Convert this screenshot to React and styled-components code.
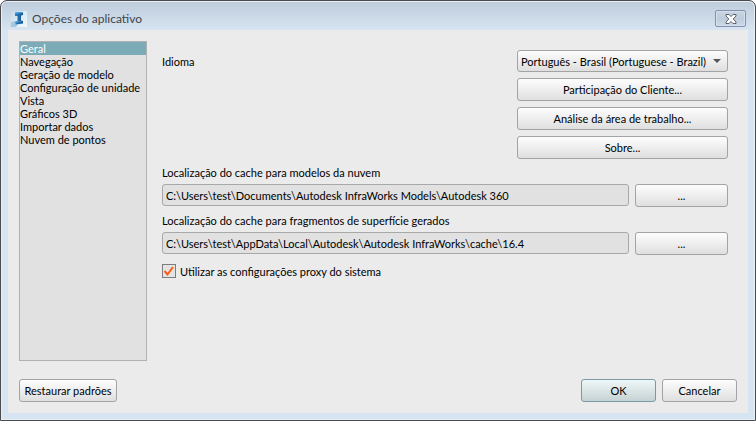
import React, { useState } from 'react';
import styled, { createGlobalStyle, css } from 'styled-components';

const GlobalStyle = createGlobalStyle`
	* {
		box-sizing: border-box;
	}
	body {
		margin: 0;
		background: #fff;
	}
	body, button, input, select {
		font-family: Lato, 'Noto Sans', sans-serif;
		font-size: 11px;
		line-height: 13px;
		color: #000;
	}
`;

const Window = styled.div`
	display: flex;
	flex-direction: column;
	min-height: 100vh;
	padding: 0 7px 7px;
	border: 1px solid #4b4a4d;
	border-radius: 7px 7px 0 0;
	background: linear-gradient(#bdcbdb, #d7e4f1 29px);
	box-shadow: inset 0 0 0 1px #e6eef6;
`;

const TitleBar = styled.header`
	display: flex;
	align-items: center;
	height: 29px;
	padding: 6px 2px 0;
`;

const Title = styled.h1`
	flex: 1;
	margin: 0 0 0 5px;
	font-size: 12px;
	font-weight: 400;
	line-height: 16px;
	color: #3f4449;
`;

const CloseButton = styled.button`
	display: flex;
	align-items: center;
	justify-content: center;
	width: 31px;
	height: 17px;
	padding: 0;
	border: 1px solid #8391ae;
	border-radius: 2px;
	background: linear-gradient(#c9d5e3, #bfccdb 50%, #cbd8e6);
	box-shadow: inset 0 0 0 1px #d6e0ec;
`;

const Content = styled.main`
	display: flex;
	flex: 1;
	flex-direction: column;
	gap: 18px;
	padding: 11px;
	background: #ebebeb;
`;

const Columns = styled.div`
	display: flex;
	flex: 1;
	gap: 15px;
`;

const Sidebar = styled.nav`
	flex: 0 0 128px;
	border: 1px solid #b1b1b1;
	background: #e1e1e1;
`;

const SidebarItem = styled.button`
	display: block;
	width: 100%;
	height: 13px;
	padding: 0;
	border: 0;
	background: ${(p) => (p.$active ? '#7aabb7' : 'transparent')};
	color: ${(p) => (p.$active ? '#fff' : '#000')};
	text-align: left;
	white-space: nowrap;
`;

const Panel = styled.section`
	display: flex;
	flex: 1;
	flex-direction: column;
	gap: 7px;
	min-width: 0;
	padding: 9px 9px 0 0;
`;

const LanguageRow = styled.div`
	display: flex;
	align-items: flex-start;
	justify-content: space-between;
`;

const LanguageLabel = styled.label`
	padding-top: 5px;
`;

const ActionColumn = styled.div`
	display: flex;
	flex-direction: column;
	gap: 6px;
	width: 211px;
`;

const raised = css`
	border: 1px solid #a3a3a3;
	border-radius: 3px;
	background: linear-gradient(#fdfdfd, #dfdfdf);
`;

const Button = styled.button`
	${raised};
	flex: ${(p) => (p.$width ? `0 0 ${p.$width}px` : '0 0 auto')};
	height: 23px;
	padding: 0;
	white-space: nowrap;

	${(p) =>
		p.$primary &&
		css`
			border-color: #7a9aa3;
			background: linear-gradient(#eff8f8, #c6d2d3);
		`}
`;

const SelectBox = styled.div`
	position: relative;
	height: 22px;

	svg {
		position: absolute;
		top: 8px;
		right: 6px;
		pointer-events: none;
	}
`;

const Select = styled.select`
	${raised};
	appearance: none;
	width: 100%;
	height: 22px;
	padding: 0 0 0 3px;
`;

const Field = styled.div`
	display: flex;
	flex-direction: column;
	gap: 5px;
`;

const FieldRow = styled.div`
	display: flex;
	align-items: flex-start;
	gap: 6px;
`;

const PathInput = styled.input`
	flex: 1;
	min-width: 0;
	height: 22px;
	padding: 0 3px;
	border: 1px solid #a8a8a8;
	border-radius: 3px;
	background: #e1e1e1;
`;

const CheckLabel = styled.label`
	display: flex;
	align-items: center;
	align-self: flex-start;
	gap: 4px;
	padding-top: 2px;
`;

const CheckBox = styled.span`
	position: relative;
	width: 14px;
	height: 14px;

	input {
		appearance: none;
		display: block;
		width: 14px;
		height: 14px;
		margin: 0;
		border: 1px solid #7d7d7d;
		background: #e4e4e4;
	}

	svg {
		position: absolute;
		inset: 0;
		pointer-events: none;
	}
`;

const Footer = styled.footer`
	display: flex;
	gap: 6px;
`;

const Spacer = styled.div`
	flex: 1;
`;

const sections = [
	'Geral',
	'Navegação',
	'Geração de modelo',
	'Configuração de unidade',
	'Vista',
	'Gráficos 3D',
	'Importar dados',
	'Nuvem de pontos',
];

const Logo = () => (
	<svg width="17" height="16" viewBox="-1 0 17 16" aria-hidden="true">
		<defs>
			<linearGradient id="logoBack" x1="0" y1="0" x2="1" y2="1">
				<stop offset="0" stopColor="#c3d9ea" />
				<stop offset="0.5" stopColor="#dcebf5" />
				<stop offset="1" stopColor="#f2f7fa" />
			</linearGradient>
			<linearGradient id="logoBeam" x1="0" y1="0" x2="1" y2="0">
				<stop offset="0" stopColor="#2b86c8" />
				<stop offset="1" stopColor="#174f86" />
			</linearGradient>
		</defs>
		<path fill="url(#logoBack)" d="M0 0h16v16H0z" />
		<path fill="#a3c8e2" d="M0 11l4-1 3 3-2 3H0z" />
		<path fill="url(#logoBeam)" d="M4 1.500l8-.5v3l-2 .5v5l2 .5v2.500l-7.500 1v-3l2-.5v-5L4 5z" />
		<path fill="#4aa3dc" d="M4 1.500l8-.5v1l-8 1zM4.500 10.500L12 10l-7.500 2z" />
	</svg>
);

const CloseIcon = () => (
	<svg width="12" height="10" viewBox="0 0 12 10" aria-hidden="true">
		<path
			d="M1 .5h3L6 2.500 8 .5h3v1.500L8.200 5 11 8v1.500H8L6 7.500 4 9.500H1V8L3.800 5 1 2z"
			fill="#fff"
			stroke="#5a5f6d"
			strokeLinejoin="round"
		/>
	</svg>
);

export default function App() {
	const [active, setActive] = useState('Geral');
	const [useProxy, setUseProxy] = useState(true);

	return (
		<>
			<GlobalStyle />
			<Window>
				<TitleBar>
					<Logo />
					<Title>Opções do aplicativo</Title>
					<CloseButton type="button" aria-label="Fechar">
						<CloseIcon />
					</CloseButton>
				</TitleBar>
				<Content>
					<Columns>
						<Sidebar>
							{sections.map((name) => (
								<SidebarItem
									key={name}
									type="button"
									$active={name === active}
									onClick={() => setActive(name)}
								>
									{name}
								</SidebarItem>
							))}
						</Sidebar>
						<Panel>
							<LanguageRow>
								<LanguageLabel htmlFor="language">Idioma</LanguageLabel>
								<ActionColumn>
									<SelectBox>
										<Select id="language">
											<option>Português - Brasil (Portuguese - Brazil)</option>
										</Select>
										<svg width="10" height="6" viewBox="0 0 10 6" aria-hidden="true">
											<path fill="#555" d="M1 1h8L5 5z" />
										</svg>
									</SelectBox>
									<Button type="button">Participação do Cliente...</Button>
									<Button type="button">Análise da área de trabalho...</Button>
									<Button type="button">Sobre...</Button>
								</ActionColumn>
							</LanguageRow>
							<Field>
								<label htmlFor="modelCache">Localização do cache para modelos da nuvem</label>
								<FieldRow>
									<PathInput
										id="modelCache"
										readOnly
										value="C:\Users\test\Documents\Autodesk InfraWorks Models\Autodesk 360"
									/>
									<Button type="button" $width={93}>...</Button>
								</FieldRow>
							</Field>
							<Field>
								<label htmlFor="tileCache">
									Localização do cache para fragmentos de superfície gerados
								</label>
								<FieldRow>
									<PathInput
										id="tileCache"
										readOnly
										value="C:\Users\test\AppData\Local\Autodesk\Autodesk InfraWorks\cache\16.4"
									/>
									<Button type="button" $width={93}>...</Button>
								</FieldRow>
							</Field>
							<CheckLabel>
								<CheckBox>
									<input
										type="checkbox"
										checked={useProxy}
										onChange={(e) => setUseProxy(e.target.checked)}
									/>
									{useProxy && (
										<svg width="14" height="14" viewBox="0 0 14 14" aria-hidden="true">
											<path d="M2.500 7l3 3.500L11 3" fill="none" stroke="#ff5a10" strokeWidth="2" />
										</svg>
									)}
								</CheckBox>
								Utilizar as configurações proxy do sistema
							</CheckLabel>
						</Panel>
					</Columns>
					<Footer>
						<Button type="button" $width={98}>Restaurar padrões</Button>
						<Spacer />
						<Button type="button" $width={75} $primary>OK</Button>
						<Button type="button" $width={75}>Cancelar</Button>
					</Footer>
				</Content>
			</Window>
		</>
	);
}
